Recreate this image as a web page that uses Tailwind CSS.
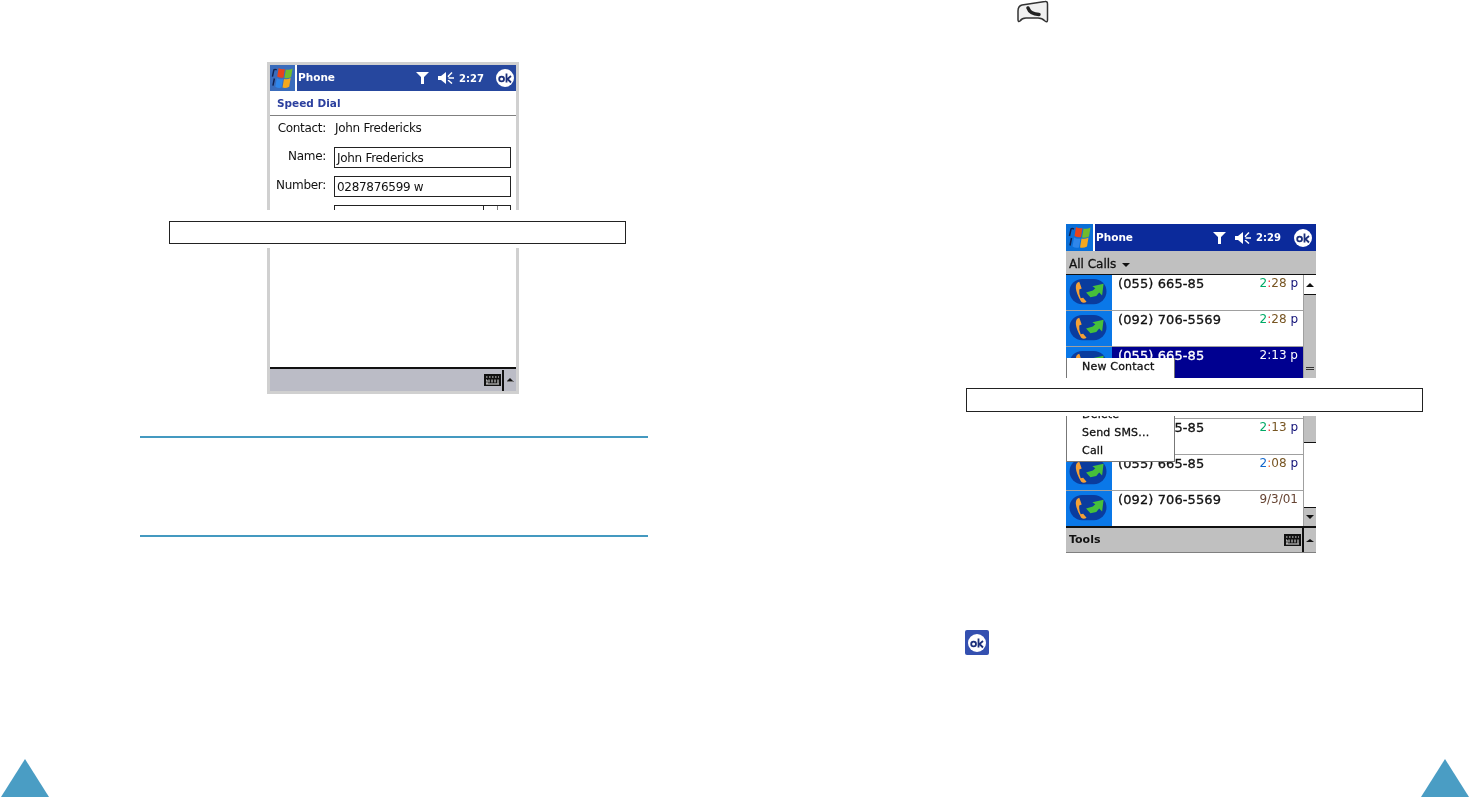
<!DOCTYPE html>
<html lang="en">
<head>
<meta charset="UTF-8">
<title>Phone manual pages</title>
<script src="https://cdn.jsdelivr.net/npm/@tailwindcss/browser@4"></script>
</head>
<body class="bg-white font-['DejaVu_Sans',sans-serif] text-[#111]">
<svg class="hidden">
  <symbol id="flag" viewBox="0 0 24 24">
    <path d="M8 1q3 2 6.500 1l-1.500 9q-3 1-6.500-1z" fill="#e8431a"/>
    <path d="M15.500 2.500q3.500 1 7-1L21 10.500q-3.500 2-7 1z" fill="#72bb2c"/>
    <path d="M6 11.500q3 2 6.500 1l-1.500 9q-3.500 1-6.500-1z" fill="#2f86ea"/>
    <path d="M13.500 12.500q3.500 1 7-1l-1.500 9q-3.500 2-7 1z" fill="#f5a81e"/>
    <path d="M6 3q-2-1-3 0L1.500 10M3.500 12L2 19.500" stroke="#10204f" stroke-width="1.500" fill="none"/>
  </symbol>
  <symbol id="funnel" viewBox="0 0 13 12">
    <path d="M0 0h13L8 5v7H5V5z" fill="#ffffff"/>
  </symbol>
  <symbol id="speaker" viewBox="0 0 17 12">
    <path d="M0 4h3l5-4v12L3 8H0z" fill="#ffffff"/>
    <path d="M14 .500l-3.500 3.500v1M10.500 6H16M10.500 8v.500l3.500 3" stroke="#ffffff" stroke-width="1.500" fill="none"/>
  </symbol>
  <symbol id="ok" viewBox="0 0 18 18">
    <circle cx="9" cy="9" r="9" fill="#ffffff"/>
    <circle cx="5.600" cy="10" r="2.400" fill="none" stroke="#1b2f7a" stroke-width="1.800"/>
    <path d="M10.500 4.500v9M15 7l-3.500 3 3.500 3.500" stroke="#1b2f7a" stroke-width="1.800" fill="none"/>
  </symbol>
  <symbol id="keyboard" viewBox="0 0 17 12">
    <path d="M0 0h17v12H0z" fill="#111111"/>
    <path d="M2 3h1.500M5 3h1.500M8 3h1.500M11 3h1.500M14 3h1M2 6h1v4M5 5.500v3M8 5.500v3M11 5.500v3M14 5.500v4M2 10h13" stroke="#e8e8e8" stroke-width="1" fill="none"/>
  </symbol>
  <symbol id="callout" viewBox="0 0 45 36">
    <rect x="3" y="4" width="38" height="26" rx="13" fill="#0a3c9e"/>
    <path d="M13 7q-4 1-3.500 6.500t5.500 14q2.500 2 5.500 0l-3.500-4-2.500.5q-2-4.500-1.500-9l2.500-1z" fill="#f5a035"/>
    <path d="M20 18l7-2 2.500-2.500-3-2L38 9l-1.500 12-3-3-3 3.500-6 1.500z" fill="#46c03a"/>
  </symbol>
</svg>

<div class="relative w-[1470px] h-[798px] overflow-hidden">

  <!-- speed dial screen -->
  <div class="absolute left-[267px] top-[62px] w-[252px] h-[332px] border-[3px] border-[#d0d0d0] flex flex-col bg-white blur-[0.3px]">
    <div class="h-[26px] shrink-0 flex items-center bg-[#26479e] text-white">
      <div class="w-[25px] h-full flex items-center justify-center bg-[#3a6cbc]">
        <svg class="w-[23px] h-[23px]"><use href="#flag"/></svg>
      </div>
      <div class="w-[2px] h-full bg-white"></div>
      <span class="ml-px text-[10.5px] font-bold">Phone</span>
      <svg class="ml-auto w-[13px] h-[12px]"><use href="#funnel"/></svg>
      <svg class="ml-[9px] w-[17px] h-[12px]"><use href="#speaker"/></svg>
      <span class="ml-[4px] w-[26px] text-[10px] font-bold">2:27</span>
      <svg class="ml-[11px] mr-[2px] w-[18px] h-[18px]"><use href="#ok"/></svg>
    </div>
    <div class="h-[25px] shrink-0 flex items-center pl-[7px] pt-px border-b border-[#808080] text-[10.5px] font-bold text-[#2b3f9e]">Speed Dial</div>
    <div class="grid grid-cols-[56px_1fr] gap-x-2 gap-y-2 pr-[5px] text-[12px] tracking-[-0.3px]">
      <div class="h-[23px] flex items-center justify-end">Contact:</div>
      <div class="h-[23px] flex items-center pl-px">John Fredericks</div>
      <div class="h-[21px] flex items-center justify-end pb-[4px]">Name:</div>
      <div class="h-[21px] flex items-center pl-[2px] border border-[#222]">John Fredericks</div>
      <div class="h-[21px] flex items-center justify-end pb-[4px]">Number:</div>
      <div class="h-[21px] flex items-center pl-[2px] border border-[#222]">0287876599 w</div>
      <div class="h-[21px] flex items-center justify-end">Location:</div>
      <div class="h-[21px] flex justify-end border border-[#222]">
        <div class="w-[14px] border-l border-[#222]"></div>
        <div class="w-[13px] border-l border-[#808080]"></div>
      </div>
    </div>
    <div class="mt-auto h-[24px] shrink-0 flex items-stretch justify-end border-t-2 border-[#111] bg-[#bbbcc6]">
      <svg class="self-center w-[17px] h-[12px]"><use href="#keyboard"/></svg>
      <div class="ml-px mt-[1px] w-[2px] bg-[#111]"></div>
      <div class="w-[12px] flex flex-col items-center justify-center">
        <div class="w-0 h-0 border-x-[3px] border-x-transparent border-b-[3px] border-b-[#111]"></div>
        <div class="w-[7px] h-px bg-[#777]"></div>
      </div>
    </div>
  </div>

  <!-- caption band over the speed dial screen -->
  <div class="absolute left-[160px] top-[210px] w-[480px] h-[38px] bg-white pl-[9px] pt-[11px]">
    <div class="w-[457px] h-[23px] border border-[#222]"></div>
  </div>

  <!-- note rules -->
  <div class="absolute left-[140px] top-[436px] w-[508px] h-[101px] border-y-2 border-[#4499c0]"></div>

  <!-- call log screen -->
  <div class="absolute left-[1066px] top-[224px] w-[250px] h-[329px] flex flex-col bg-white border-b border-[#808080] blur-[0.3px]">
    <div class="h-[27px] shrink-0 flex items-center bg-[#0b2a9b] text-white">
      <div class="w-[27px] h-full flex items-center justify-center bg-[#0a6fd8]">
        <svg class="w-[24px] h-[24px]"><use href="#flag"/></svg>
      </div>
      <div class="w-[2px] h-full bg-white"></div>
      <span class="ml-px pt-px text-[10.5px] font-bold">Phone</span>
      <svg class="ml-auto w-[13px] h-[12px]"><use href="#funnel"/></svg>
      <svg class="ml-[9px] w-[17px] h-[12px]"><use href="#speaker"/></svg>
      <span class="ml-[4px] w-[26px] text-[10px] font-bold">2:29</span>
      <svg class="ml-[12px] mr-[4px] w-[18px] h-[18px]"><use href="#ok"/></svg>
    </div>
    <div class="h-[23px] shrink-0 flex items-center pl-[3px] pt-[3px] bg-[#c0c0c0] text-[12px] [-webkit-text-stroke:0.3px_#111]">
      All Calls
      <div class="ml-[6px] mt-px w-0 h-0 border-x-[4px] border-x-transparent border-t-[4px] border-t-[#111]"></div>
    </div>
    <div class="flex flex-1 min-h-0 border-t border-[#111]">
      <div class="flex-1 flex flex-col text-[13px] tracking-[0.1px] [-webkit-text-stroke:0.3px_#111]">
        <div class="h-[36px] flex items-start border-b border-[#a0a0a0]">
          <div class="w-[46px] h-full shrink-0 bg-[#0a78e8]"><svg class="w-[45px] h-[35px]"><use href="#callout"/></svg></div>
          <span class="ml-[6px] flex-1 leading-[17px]">(055) 665-85</span>
          <span class="mr-[5px] text-[12px] tracking-normal leading-[17px] [-webkit-text-stroke:0]"><span class="text-[#0a6]">2</span><span class="text-[#e33]">:</span><span class="text-[#752]">28</span> <span class="text-[#117]">p</span></span>
        </div>
        <div class="h-[36px] flex items-start border-b border-[#a0a0a0]">
          <div class="w-[46px] h-full shrink-0 bg-[#0a78e8]"><svg class="w-[45px] h-[35px]"><use href="#callout"/></svg></div>
          <span class="ml-[6px] flex-1 leading-[17px]">(092) 706-5569</span>
          <span class="mr-[5px] text-[12px] tracking-normal leading-[17px] [-webkit-text-stroke:0]"><span class="text-[#0a6]">2</span><span class="text-[#e33]">:</span><span class="text-[#752]">28</span> <span class="text-[#117]">p</span></span>
        </div>
        <div class="h-[36px] flex items-start bg-[#000090] text-white [-webkit-text-stroke:0.3px_#ffffff]">
          <div class="w-[46px] h-full shrink-0 bg-[#0a78e8]"><svg class="w-[45px] h-[35px]"><use href="#callout"/></svg></div>
          <span class="ml-[6px] flex-1 leading-[17px]">(055) 665-85</span>
          <span class="mr-[5px] text-[12px] tracking-normal leading-[17px] [-webkit-text-stroke:0]">2:13 p</span>
        </div>
        <div class="h-[36px] flex items-start border-b border-[#a0a0a0]">
          <div class="w-[46px] h-full shrink-0 bg-[#0a78e8]"></div>
        </div>
        <div class="h-[36px] flex items-start border-b border-[#a0a0a0]">
          <div class="w-[46px] h-full shrink-0 bg-[#0a78e8]"><svg class="w-[45px] h-[35px]"><use href="#callout"/></svg></div>
          <span class="ml-[6px] flex-1 leading-[17px]">(055) 665-85</span>
          <span class="mr-[5px] text-[12px] tracking-normal leading-[17px] [-webkit-text-stroke:0]"><span class="text-[#0a6]">2</span><span class="text-[#e33]">:</span><span class="text-[#752]">13</span> <span class="text-[#117]">p</span></span>
        </div>
        <div class="h-[36px] flex items-start border-b border-[#a0a0a0]">
          <div class="w-[46px] h-full shrink-0 bg-[#0a78e8]"><svg class="w-[45px] h-[35px]"><use href="#callout"/></svg></div>
          <span class="ml-[6px] flex-1 leading-[17px]">(055) 665-85</span>
          <span class="mr-[5px] text-[12px] tracking-normal leading-[17px] [-webkit-text-stroke:0]"><span class="text-[#16c]">2</span><span class="text-[#e63]">:</span><span class="text-[#752]">08</span> <span class="text-[#117]">p</span></span>
        </div>
        <div class="h-[35px] flex items-start">
          <div class="w-[46px] h-full shrink-0 bg-[#0a78e8]"><svg class="w-[45px] h-[35px]"><use href="#callout"/></svg></div>
          <span class="ml-[6px] flex-1 leading-[17px]">(092) 706-5569</span>
          <span class="mr-[5px] text-[12px] tracking-normal leading-[17px] text-[#643] [-webkit-text-stroke:0]">9/3/01</span>
        </div>
      </div>
      <div class="w-[13px] shrink-0 flex flex-col border-l border-[#a0a0a0]">
        <div class="h-[20px] flex items-center justify-center border-b border-[#111]">
          <div class="w-0 h-0 border-x-[4px] border-x-transparent border-b-[4px] border-b-[#111]"></div>
        </div>
        <div class="h-[148px] flex items-center justify-center bg-[#c0c0c0] border-b border-[#111]">
          <div class="w-[8px] h-[3px] border-y border-[#333]"></div>
        </div>
        <div class="flex-1"></div>
        <div class="h-[19px] flex items-center justify-center bg-[#c0c0c0] border-t border-[#111]">
          <div class="w-0 h-0 border-x-[4px] border-x-transparent border-t-[4px] border-t-[#111]"></div>
        </div>
      </div>
    </div>
    <div class="h-[26px] shrink-0 flex items-stretch border-t-2 border-[#111] bg-[#c0c0c0]">
      <span class="self-center ml-[3px] text-[11px] font-bold">Tools</span>
      <svg class="ml-auto self-center w-[17px] h-[12px]"><use href="#keyboard"/></svg>
      <div class="ml-px w-[2px] bg-[#111]"></div>
      <div class="w-[12px] flex items-center justify-center">
        <div class="w-0 h-0 border-x-[4px] border-x-transparent border-b-[3px] border-b-[#111]"></div>
      </div>
    </div>
  </div>

  <!-- popup menu over the call list -->
  <div class="absolute left-[1066px] top-[358px] w-[109px] h-[104px] bg-white border-l border-r border-b border-[#777] pl-[15px] text-[11px] tracking-[0.2px] [-webkit-text-stroke:0.3px_#111] blur-[0.3px]">
    <div class="h-[18px] flex items-center">New Contact</div>
    <div class="h-[30px]"></div>
    <div class="h-[18px] flex items-center">Delete</div>
    <div class="h-[18px] flex items-center">Send SMS...</div>
    <div class="h-[18px] flex items-center">Call</div>
  </div>

  <!-- caption band over the call log screen -->
  <div class="absolute left-[960px] top-[378px] w-[470px] h-[38px] bg-white pl-[6px] pt-[10px]">
    <div class="w-[457px] h-[24px] border border-[#222]"></div>
  </div>

  <!-- phone key, top right -->
  <svg class="absolute left-[1016px] top-0 w-[33px] h-[25px] blur-[0.3px]" viewBox="0 0 33 25">
    <path d="M2 11q0-5 4-6L29 1.500q2.500-.5 2.500 2.500v16q0 3-2.500 1-3-3-7-3H10q-4 0-6 3-2 1.500-2-1.500z" fill="#f0f0f0" stroke="#333" stroke-width="1.500"/>
    <path d="M12 8q2 6 11 6.500" fill="none" stroke="#222" stroke-width="3.500" stroke-linecap="round"/>
  </svg>

  <!-- ok button -->
  <div class="absolute left-[965px] top-[630px] w-[24px] h-[25px] flex items-center justify-center bg-[#3450b0] rounded-[2px] blur-[0.3px]">
    <svg class="w-[18px] h-[18px]"><use href="#ok"/></svg>
  </div>

  <!-- page corner triangles -->
  <svg class="absolute left-0 top-[759px] w-[50px] h-[39px]" viewBox="0 0 50 39"><path d="M25 0L49 38H1z" fill="#4a9dc4"/></svg>
  <svg class="absolute left-[1420px] top-[759px] w-[50px] h-[39px]" viewBox="0 0 50 39"><path d="M25 0L49 38H1z" fill="#4a9dc4"/></svg>
</div>
</body>
</html>
